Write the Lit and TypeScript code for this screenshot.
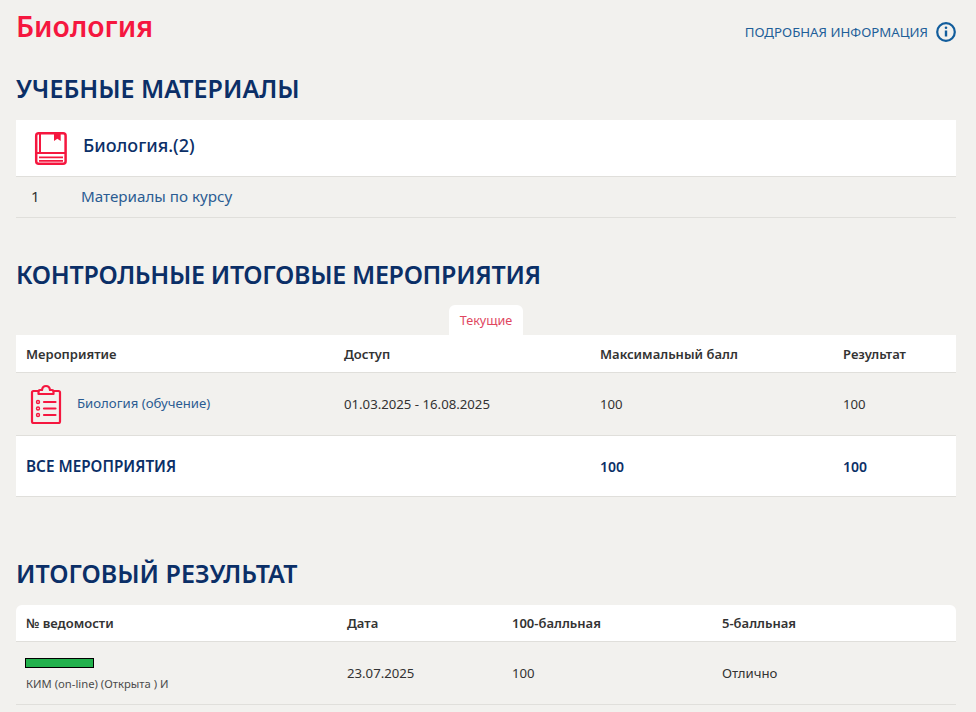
import { LitElement, html, css } from "lit";
import { customElement } from "lit/decorators.js";

const bookIcon = html`<svg class="book" width="34" height="34" viewBox="0 0 34 34" fill="none" stroke="#f5173f" stroke-width="2.500">
  <rect x="2.200" y="2.200" width="29.400" height="30.500" rx="2.500"></rect>
  <path d="M6 2.200V22M2.200 22H31.600" stroke-width="2"></path>
  <path d="M5 26.300H29M5 29.800H29" stroke-width="1.800"></path>
  <path d="M20 2H26.700V10L23.350 7.800L20 10Z" fill="#f5173f" stroke="none"></path>
</svg>`;

const clipboardIcon = html`<svg class="clip" width="32" height="40" viewBox="0 0 32 40" fill="none" stroke="#f5173f" stroke-width="2.200" stroke-linecap="round" stroke-linejoin="round">
  <path d="M8.500 7H3.500Q2 7 2 8.500V37.500Q2 39 3.500 39H28.500Q30 39 30 37.500V8.500Q30 7 28.500 7H23.500"></path>
  <path d="M8.500 10H23.500V7.500Q23.500 6 22 6H20Q19.500 2 16 2Q12.500 2 12 6H10Q8.500 6 8.500 7.500Z"></path>
  <circle cx="8" cy="18" r="1.500" stroke-width="1.400"></circle>
  <circle cx="8" cy="24.500" r="1.500" stroke-width="1.400"></circle>
  <circle cx="8" cy="31" r="1.500" stroke-width="1.400"></circle>
  <path d="M14 18H25.500M14 24.500H25.500M14 31H25.500"></path>
</svg>`;

@customElement("app-root")
export class AppRoot extends LitElement {
  static styles = css`
    :host { display: block; background: #f2f1ee; font-family: "Noto Sans", "Open Sans", sans-serif; color: #333; overflow: hidden; height: 712px; }
    .page { padding: 0 20px 0 16px; }
    .top { display: flex; justify-content: space-between; align-items: flex-start; height: 72px; }
    h1 { margin: 9px 0 0; font-size: 28.400px; line-height: 34px; font-weight: 600; color: #f5173f; }
    .info { display: flex; align-items: center; gap: 8px; margin-top: 21px; font-size: 13.250px; line-height: 22px; color: #1f5f99; }
    h2 { margin: 0; font-size: 25px; line-height: 32px; font-weight: 600; color: #0b2f67; }
    h2.tight { letter-spacing: -0.320px; }
    .m-head { display: flex; align-items: center; height: 56px; margin-top: 16px; background: #fff; border-bottom: 1px solid #e0dfdb; }
    .book { margin-left: 18px; }
    .m-head span { margin-left: 15px; padding-bottom: 6px; font-size: 18px; font-weight: 500; color: #0b2f67; }
    .m-row { display: flex; align-items: center; height: 41px; padding-bottom: 2px; box-sizing: border-box; border-bottom: 1px solid #e0dfdb; font-size: 15.200px; }
    .m-row .n { width: 65px; padding-left: 15px; box-sizing: border-box; font-size: 15px; }
    .link { color: #2b5c92; }
    .sec2 { margin-top: 40px; }
    .tabs { display: flex; justify-content: center; margin-top: 15px; }
    .tab { height: 30px; padding: 0 11px; display: flex; align-items: center; background: #fff; border-radius: 6px 6px 0 0; font-size: 12.600px; color: #e0465f; }
    .row { display: grid; align-items: center; padding-left: 10px; border-bottom: 1px solid #e0dfdb; font-size: 13.200px; }
    .t1 { grid-template-columns: 318px 256px 243px 1fr; }
    .t3 { grid-template-columns: 321px 165px 210px 1fr; }
    .head { height: 37px; background: #fff; font-weight: 600; font-size: 13px; color: #333; }
    .t3.head { height: 36px; border-radius: 6px 6px 0 0; }
    .body { height: 62px; }
    .act { display: flex; align-items: center; gap: 15px; font-size: 13.200px; }
    .act span { padding-bottom: 2px; }
    .clip { margin-left: 4px; }
    .total { height: 60px; background: #fff; font-size: 14px; font-weight: 600; color: #0b2f67; }
    .label { grid-column: span 2; font-size: 15.300px; font-weight: 600; }
    .sec3 { margin-top: 60px; }
    .sec3 h2 { margin-bottom: 16px; }
    .kimcell { padding-top: 4px; }
    .bar { width: 67px; height: 8px; margin-left: -1px; background: #22b14c; border: 1px solid #000; margin-bottom: 8px; }
    .kim { font-size: 11.250px; line-height: 16px; color: #4b4b4b; }
  `;

  render() {
    return html`<div class="page">
      <div class="top">
        <h1>Биология</h1>
        <div class="info">ПОДРОБНАЯ ИНФОРМАЦИЯ
          <svg width="20" height="20" viewBox="0 0 20 20" fill="none">
            <circle cx="10" cy="10" r="8.800" stroke="#125d9c" stroke-width="2.200"></circle>
            <path d="M10 8.500V14.500" stroke="#125d9c" stroke-width="2.400"></path>
            <circle cx="10" cy="5.800" r="1.300" fill="#125d9c"></circle>
          </svg>
        </div>
      </div>
      <h2>УЧЕБНЫЕ МАТЕРИАЛЫ</h2>
      <div class="m-head">${bookIcon}<span>Биология.(2)</span></div>
      <div class="m-row"><div class="n">1</div><div class="link">Материалы по курсу</div></div>
      <div class="sec2">
        <h2 class="tight">КОНТРОЛЬНЫЕ ИТОГОВЫЕ МЕРОПРИЯТИЯ</h2>
        <div class="tabs"><div class="tab">Текущие</div></div>
        <div class="row t1 head"><div>Мероприятие</div><div>Доступ</div><div>Максимальный балл</div><div>Результат</div></div>
        <div class="row t1 body">
          <div class="act">${clipboardIcon}<span class="link">Биология (обучение)</span></div>
          <div>01.03.2025 - 16.08.2025</div><div>100</div><div>100</div>
        </div>
        <div class="row t1 total"><div class="label">ВСЕ МЕРОПРИЯТИЯ</div><div>100</div><div>100</div></div>
      </div>
      <div class="sec3">
        <h2>ИТОГОВЫЙ РЕЗУЛЬТАТ</h2>
        <div class="row t3 head"><div>№ ведомости</div><div>Дата</div><div>100-балльная</div><div>5-балльная</div></div>
        <div class="row t3 body">
          <div class="kimcell"><div class="bar"></div><div class="kim">КИМ (on-line) (Открыта ) И</div></div>
          <div>23.07.2025</div><div>100</div><div>Отлично</div>
        </div>
      </div>
    </div>`;
  }
}
